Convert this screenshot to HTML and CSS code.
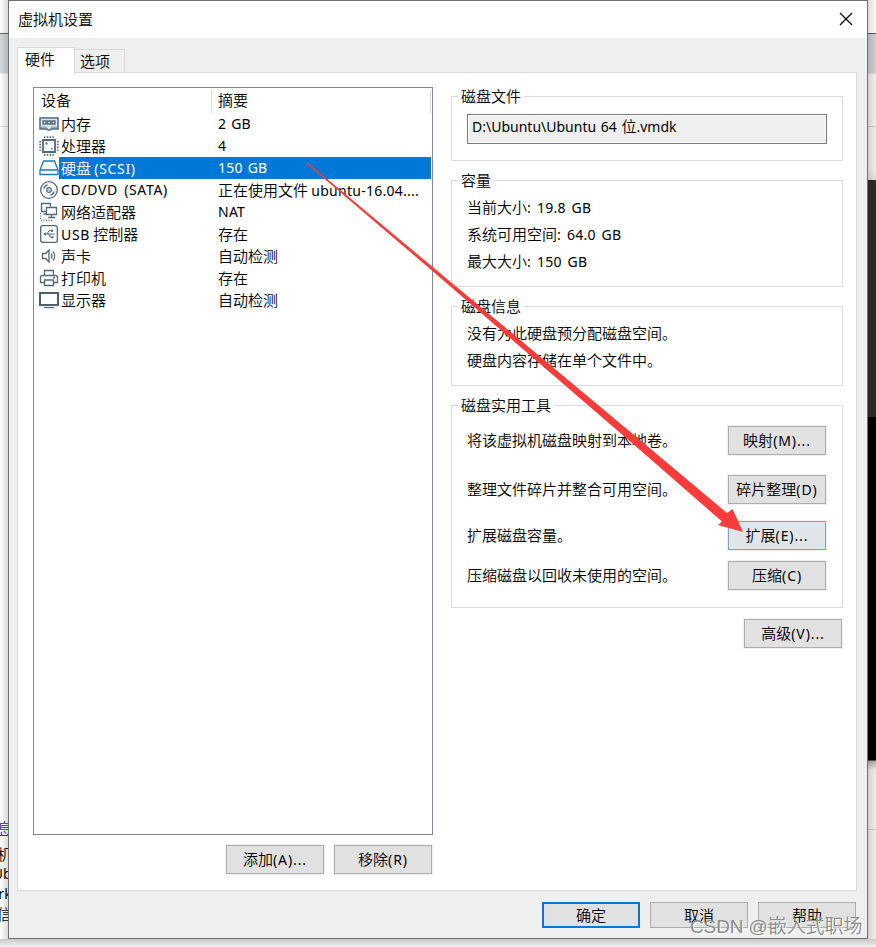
FILE: index.html
```html
<!DOCTYPE html>
<html lang="zh-CN">
<head>
<meta charset="utf-8">
<title>虚拟机设置</title>
<link rel="stylesheet" href="styles.css">
</head>
<body>
<div class="behind left"><span class="link">息</span><span>主机</span><span class="l">Ub</span><span class="l">rk</span><span>络信</span></div>
<div class="behind right"></div>
<main class="dialog">
  <header class="titlebar"><h1>虚拟机设置</h1>
    <svg class="close" width="14" height="14" viewBox="0 0 14 14"><path d="M1 1 13 13M13 1 1 13" stroke="#000" stroke-width="1.2" fill="none"/></svg>
  </header>
  <nav class="tabs"><div class="tab active">硬件</div><div class="tab">选项</div></nav>
  <section class="panel">
    <div class="hardware">
      <div class="list">
        <div class="head"><span>设备</span><span>摘要</span></div>
        <div class="row"><svg viewBox="0 0 20 20"><path d="M1 4h18v11h-7l-1 1H9l-1-1H1z" fill="#dfe8ee" stroke="#53697a" stroke-width="1.500"/><path class="s" d="M4 7h3v3H4zM8.500 7h3v3h-3zM13 7h3v3h-3z"/><path class="s t" d="M3 12.500v2M5 12.500v2M7 12.500v2M13 12.500v2M15 12.500v2M17 12.500v2"/></svg><b>内存</b><span class="l">2 GB</span></div>
        <div class="row"><svg viewBox="0 0 20 20"><path class="s w" d="M4 4h12v12H4z"/><path class="s w" stroke-dasharray="1.400 1.400" d="M5 1.200h11M5 18.800h11M1.200 5v11M18.800 5v11"/><path class="f" d="M6.500 6.500h2v2h-2zM12 12h1.500v1.500H12z"/></svg><b>处理器</b><span class="l">4</span></div>
        <div class="row selected"><svg viewBox="0 0 20 20"><path d="M4.500 3h11L19 12v4.500H1V12zM1 12h18" fill="#fff" stroke="#1a78c2" stroke-width="1.300"/></svg><b>硬盘 <i class="l">(SCSI)</i></b><span class="l">150 GB</span></div>
        <div class="row"><svg viewBox="0 0 20 20"><circle class="s" cx="10" cy="10" r="8.300"/><circle class="s" cx="10" cy="10" r="2.300"/><circle class="f" cx="10" cy="10" r=".7"/><path class="s" d="M4.800 8.500c.5-2 1.700-3.200 3.700-3.700M15.200 11.500c-.5 2-1.700 3.200-3.700 3.700"/></svg><b class="l">CD/DVD (SATA)</b><span>正在使用文件 <i class="l">ubuntu-16.04....</i></span></div>
        <div class="row"><svg viewBox="0 0 20 20"><path class="s" d="M7 9.500H2.500v-8h9V4.500M4.500 12H8M7.500 5.500h10v7h-10zM12.500 12.500v3M9 15.500h7"/><path class="s" stroke-dasharray="1 1.500" d="M1.500 11v7.500M2 18.500h11"/></svg><b>网络适配器</b><span class="l">NAT</span></div>
        <div class="row"><svg viewBox="0 0 20 20"><rect class="s" x="1.700" y="1.700" width="16.600" height="16.600" rx="2"/><path class="s t" d="M6 10h9.500M8 10l2-3.300h2.500M9.500 10l2 3.300H13"/><path class="f" d="M4 10l3-1.700v3.400zM12 5.800h2v2h-2zM12.500 12.300h2v2h-2z"/></svg><b><i class="l">USB</i> 控制器</b><span>存在</span></div>
        <div class="row"><svg viewBox="0 0 20 20"><path class="s" d="M3.500 7.500h3L10 4v12l-3.500-3.500h-3zM12 7.500c1.200 1.500 1.200 3.500 0 5M14 5.500c2.200 2.600 2.200 6.400 0 9"/></svg><b>声卡</b><span>自动检测</span></div>
        <div class="row"><svg viewBox="0 0 20 20"><path class="s" d="M5.500 7V2.500h9V7M5.500 14.500h-4v-5q0-2 2-2h13q2 0 2 2v5h-4M5.500 12h9v5.500h-9z"/><path class="f" d="M14 9h2v1.500h-2z"/></svg><b>打印机</b><span>存在</span></div>
        <div class="row"><svg viewBox="0 0 20 20"><path d="M1 3h18v12H1z" fill="none" stroke="#4c6070" stroke-width="2"/><path class="s" d="M5 17.500h10"/></svg><b>显示器</b><span>自动检测</span></div>
      </div>
      <div class="actions"><button>添加<i class="l">(A)...</i></button><button>移除<i class="l">(R)</i></button></div>
    </div>
    <div class="details">
      <fieldset class="file"><legend>磁盘文件</legend><div class="path"><i class="l">D:\Ubuntu\Ubuntu 64 </i>位<i class="l">.vmdk</i></div></fieldset>
      <fieldset class="capacity"><legend>容量</legend><p>当前大小<i class="l">: 19.8 GB</i></p><p>系统可用空间<i class="l">: 64.0 GB</i></p><p>最大大小<i class="l">: 150 GB</i></p></fieldset>
      <fieldset class="info"><legend>磁盘信息</legend><p>没有为此硬盘预分配磁盘空间。</p><p>硬盘内容存储在单个文件中。</p></fieldset>
      <fieldset class="tools"><legend>磁盘实用工具</legend>
        <div class="tool"><span>将该虚拟机磁盘映射到本地卷。</span><button>映射<i class="l">(M)...</i></button></div>
        <div class="tool"><span>整理文件碎片并整合可用空间。</span><button>碎片整理<i class="l">(D)</i></button></div>
        <div class="tool"><span>扩展磁盘容量。</span><button class="hot">扩展<i class="l">(E)...</i></button></div>
        <div class="tool"><span>压缩磁盘以回收未使用的空间。</span><button>压缩<i class="l">(C)</i></button></div>
      </fieldset>
      <button class="advanced">高级<i class="l">(V)...</i></button>
    </div>
  </section>
  <footer><button class="default">确定</button><button>取消</button><button>帮助</button></footer>
</main>
<svg class="arrow" width="876" height="947" viewBox="0 0 876 947"><path d="M307.500 162.500 640 440 727 513 732.500 509 743 532 718 525 722 521.500 640 450 433 271.500 306.500 163.500Z" fill="#fa3c3a"/></svg>
<div class="watermark">CSDN @嵌入式职场</div>
</body>
</html>
```
FILE: styles.css
```css
* { box-sizing: border-box; }
body { margin: 0; width: 876px; height: 947px; overflow: hidden; position: relative; background: linear-gradient(#eee 938px, #c8c8c8 939px, #f0f0f0 947px); font: 15px/22px "Noto Sans CJK SC", sans-serif; font-weight: 350; color: #000; }
i, b { font-style: normal; font-weight: inherit; }
.l, b.l, i.l { font-family: "Noto Sans", "Noto Sans CJK SC", sans-serif; font-size: 14px; font-weight: 400; letter-spacing: .25px; word-spacing: 1px; white-space: pre; }
.row b.l, .row b .l { letter-spacing: .65px; word-spacing: 2px; }
button .l { letter-spacing: .9px; }
p .l { word-spacing: 2px; }
.path .l { letter-spacing: 0; }
.behind { position: absolute; top: 0; height: 939px; width: 8px; overflow: hidden; }
.left { left: 0; padding-top: 818px; display: flex; flex-direction: column; align-items: flex-end; line-height: 20px; background: linear-gradient(90deg, transparent, rgba(0,0,0,.15)), linear-gradient(#fff 33px, #666 33px 34px, #d6d7da 34px 73px, #fff 74px 126px, #ddd 126px 127px, #fff 127px); }
.left span { flex: none; height: 20px; white-space: nowrap; margin-right: -4px; }
.left span:first-child { height: 26px; }
.link { color: #4527a0; text-decoration: underline; }
.right { right: 0; background: linear-gradient(90deg, rgba(0,0,0,.12), transparent), linear-gradient(#fafafa 33px, #555 33px 34px, #ccced2 34px 73px, #f0f0f0 74px 126px, #c8c8c8 126px 127px, #f0f0f0 127px 170px, #ddd 180px, #2b2b2b 180px 417px, #000 417px 760px, #aaa 761px, #eee 770px 829px, #ccc 829px 830px, #f0f0f0 830px); }
.dialog { margin-left: 8px; width: 860px; height: 939px; position: relative; border: 1px solid #707070; background: #efefef; }
.titlebar { height: 37px; background: #fff; display: flex; justify-content: space-between; align-items: center; padding: 0 14px 1px 9px; }
.titlebar h1 { font: inherit; margin: 0; }
.tabs { display: flex; height: 35px; padding: 9px 0 0 8px; align-items: flex-end; }
.tab { height: 24px; width: 50px; padding-left: 5px; border: 1px solid #d9d9d9; border-left: 0; border-bottom: 0; }
.tab.active { height: 27px; width: 58px; border-left: 1px solid #d9d9d9; background: #fff; margin-bottom: -1px; position: relative; padding-left: 7px; line-height: 21px; }
.panel { margin: -1px 10px 0 8px; height: 819px; border: 1px solid #d9d9d9; background: #fff; display: flex; padding: 14px 13px 0 15px; }
.hardware { width: 400px; flex: none; }
.list { height: 748px; border: 1px solid #828790; }
.head { height: 25px; display: flex; line-height: 24px; padding-left: 7px; background: linear-gradient(#ddd, #ddd) 177px 2px / 1px 23px no-repeat, linear-gradient(#ddd, #ddd) 396px 2px / 1px 23px no-repeat; }
.head span:first-child { width: 177px; }
.row { height: 22px; display: flex; align-items: center; line-height: 22px; white-space: pre; }
.row svg { width: 20px; height: 20px; margin: 0 2px 0 5px; flex: none; }
.row b { width: 157px; flex: none; }
.s { stroke: #53697a; fill: none; stroke-width: 1.3; }
.t { stroke-width: 1; }
.w { stroke-width: 1.8; }
.f { fill: #53697a; }
.selected { color: #fff; margin-right: 1px; background: linear-gradient(#0078d7, #0078d7) 25px 0 no-repeat; }
button { font: inherit; font-size: 15px; line-height: 24px; width: 98px; height: 29px; border: 1px solid #adadad; background: #e1e1e1; padding: 0 0 1px; color: #000; display: block; white-space: nowrap; box-shadow: 0 0 0 1px #f0f0f0; }
.actions { display: flex; justify-content: flex-end; gap: 10px; padding: 10px 1px; }
.details { width: 392px; flex: none; margin-left: 18px; padding-top: 9px; }
fieldset { position: relative; margin: 0 0 19px; padding: 0 15px; border: 1px solid #dcdcdc; min-width: 0; }
legend { position: absolute; top: -12px; left: 6px; padding: 0 3px; background: #fff; }
p { margin: 0; height: 27px; line-height: 27px; }
.file { height: 65px; padding-top: 17px; }
.path { height: 30px; width: 360px; border: 1px solid #7a7a7a; background: #efefef; box-shadow: inset 0 0 0 1px #fff; padding: 0 4px; }
.capacity { height: 107px; padding-top: 12px; }
.info { height: 80px; padding-top: 12px; }
.tools { height: 203px; padding-top: 20px; margin-bottom: 11px; }
.tool { display: flex; justify-content: space-between; height: 49px; width: 360px; }
.tool span { line-height: 28px; }
.tool button { margin-right: 1px; }
.tool:nth-of-type(2) { height: 46px; }
.tool:nth-of-type(3) { height: 40px; }
.hot { background: #e0e5ea; border-color: #7fa1c2; }
.advanced { margin-left: auto; margin-right: 1px; }
footer { display: flex; justify-content: flex-end; gap: 10px; padding: 11px 11px 0 0; }
footer button { height: 26px; padding: 0; }
.default { border: 2px solid #0078d7; line-height: 22px; }
.arrow { position: absolute; left: 0; top: 0; }
.watermark { position: absolute; left: 690px; top: 914px; font: 19px/26px "Liberation Sans", "Noto Sans CJK SC", sans-serif; font-weight: 350; color: #8c8c8c; text-shadow: 1px 1px #fff; white-space: nowrap; letter-spacing: -.1px; }
```
